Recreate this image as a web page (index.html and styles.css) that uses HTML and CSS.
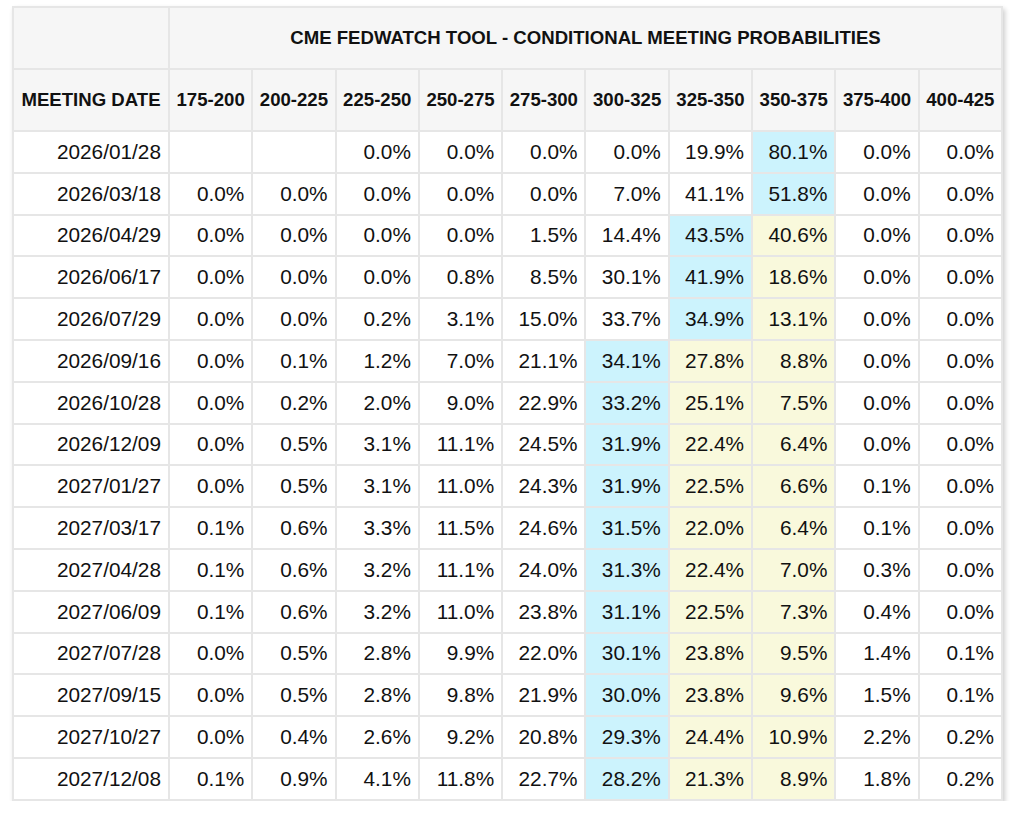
FILE: index.html
```html
<!DOCTYPE html>
<html>
<head>
<meta charset="utf-8">
<link rel="stylesheet" href="styles.css">
</head>
<body>
<div class="wrap">
<table class="fw">
<colgroup><col class="c-date"><col><col><col><col><col><col><col><col><col><col></colgroup>
<thead>
<tr class="h1"><th class="blank"></th><th colspan="10">CME FEDWATCH TOOL - CONDITIONAL MEETING PROBABILITIES</th></tr>
<tr class="h2"><th>MEETING DATE</th><th>175-200</th><th>200-225</th><th>225-250</th><th>250-275</th><th>275-300</th><th>300-325</th><th>325-350</th><th>350-375</th><th>375-400</th><th>400-425</th></tr>
</thead>
<tbody>
<tr><td>2026/01/28</td><td></td><td></td><td>0.0%</td><td>0.0%</td><td>0.0%</td><td>0.0%</td><td>19.9%</td><td class="hi">80.1%</td><td>0.0%</td><td>0.0%</td></tr>
<tr><td>2026/03/18</td><td>0.0%</td><td>0.0%</td><td>0.0%</td><td>0.0%</td><td>0.0%</td><td>7.0%</td><td>41.1%</td><td class="hi">51.8%</td><td>0.0%</td><td>0.0%</td></tr>
<tr><td>2026/04/29</td><td>0.0%</td><td>0.0%</td><td>0.0%</td><td>0.0%</td><td>1.5%</td><td>14.4%</td><td class="hi">43.5%</td><td class="lo">40.6%</td><td>0.0%</td><td>0.0%</td></tr>
<tr><td>2026/06/17</td><td>0.0%</td><td>0.0%</td><td>0.0%</td><td>0.8%</td><td>8.5%</td><td>30.1%</td><td class="hi">41.9%</td><td class="lo">18.6%</td><td>0.0%</td><td>0.0%</td></tr>
<tr><td>2026/07/29</td><td>0.0%</td><td>0.0%</td><td>0.2%</td><td>3.1%</td><td>15.0%</td><td>33.7%</td><td class="hi">34.9%</td><td class="lo">13.1%</td><td>0.0%</td><td>0.0%</td></tr>
<tr><td>2026/09/16</td><td>0.0%</td><td>0.1%</td><td>1.2%</td><td>7.0%</td><td>21.1%</td><td class="hi">34.1%</td><td class="lo">27.8%</td><td class="lo">8.8%</td><td>0.0%</td><td>0.0%</td></tr>
<tr><td>2026/10/28</td><td>0.0%</td><td>0.2%</td><td>2.0%</td><td>9.0%</td><td>22.9%</td><td class="hi">33.2%</td><td class="lo">25.1%</td><td class="lo">7.5%</td><td>0.0%</td><td>0.0%</td></tr>
<tr><td>2026/12/09</td><td>0.0%</td><td>0.5%</td><td>3.1%</td><td>11.1%</td><td>24.5%</td><td class="hi">31.9%</td><td class="lo">22.4%</td><td class="lo">6.4%</td><td>0.0%</td><td>0.0%</td></tr>
<tr><td>2027/01/27</td><td>0.0%</td><td>0.5%</td><td>3.1%</td><td>11.0%</td><td>24.3%</td><td class="hi">31.9%</td><td class="lo">22.5%</td><td class="lo">6.6%</td><td>0.1%</td><td>0.0%</td></tr>
<tr><td>2027/03/17</td><td>0.1%</td><td>0.6%</td><td>3.3%</td><td>11.5%</td><td>24.6%</td><td class="hi">31.5%</td><td class="lo">22.0%</td><td class="lo">6.4%</td><td>0.1%</td><td>0.0%</td></tr>
<tr><td>2027/04/28</td><td>0.1%</td><td>0.6%</td><td>3.2%</td><td>11.1%</td><td>24.0%</td><td class="hi">31.3%</td><td class="lo">22.4%</td><td class="lo">7.0%</td><td>0.3%</td><td>0.0%</td></tr>
<tr><td>2027/06/09</td><td>0.1%</td><td>0.6%</td><td>3.2%</td><td>11.0%</td><td>23.8%</td><td class="hi">31.1%</td><td class="lo">22.5%</td><td class="lo">7.3%</td><td>0.4%</td><td>0.0%</td></tr>
<tr><td>2027/07/28</td><td>0.0%</td><td>0.5%</td><td>2.8%</td><td>9.9%</td><td>22.0%</td><td class="hi">30.1%</td><td class="lo">23.8%</td><td class="lo">9.5%</td><td>1.4%</td><td>0.1%</td></tr>
<tr><td>2027/09/15</td><td>0.0%</td><td>0.5%</td><td>2.8%</td><td>9.8%</td><td>21.9%</td><td class="hi">30.0%</td><td class="lo">23.8%</td><td class="lo">9.6%</td><td>1.5%</td><td>0.1%</td></tr>
<tr><td>2027/10/27</td><td>0.0%</td><td>0.4%</td><td>2.6%</td><td>9.2%</td><td>20.8%</td><td class="hi">29.3%</td><td class="lo">24.4%</td><td class="lo">10.9%</td><td>2.2%</td><td>0.2%</td></tr>
<tr><td>2027/12/08</td><td>0.1%</td><td>0.9%</td><td>4.1%</td><td>11.8%</td><td>22.7%</td><td class="hi">28.2%</td><td class="lo">21.3%</td><td class="lo">8.9%</td><td>1.8%</td><td>0.2%</td></tr>
</tbody>
</table>
</div>
</body>
</html>
```
FILE: styles.css
```css
html, body {
  margin: 0;
  padding: 0;
  background: #ffffff;
}
.wrap {
  padding: 6px 0 0 12px;
}
.fw {
  border-collapse: collapse;
  table-layout: fixed;
  width: 991px;
  font-family: "Liberation Sans", Arial, sans-serif;
  color: #111111;
  background: #ffffff;
  box-shadow: 2px 3px 5px rgba(0, 0, 0, 0.2);
}
.c-date {
  width: 156px;
}
.fw th,
.fw td {
  border: 2px solid #e6e6e6;
  padding: 0;
}
.fw th {
  background: #f6f6f6;
  font-weight: bold;
  font-size: 18.6px;
  text-align: center;
  white-space: nowrap;
}
.fw .h1 th {
  height: 60px;
}
.fw .h2 th {
  height: 60px;
}
.fw td {
  height: 39.8px;
  font-size: 20.8px;
  text-align: right;
  padding-right: 7px;
  white-space: nowrap;
}
.fw td.hi {
  background: #ccf3fd;
}
.fw td.lo {
  background: #f9f9dc;
}
```
